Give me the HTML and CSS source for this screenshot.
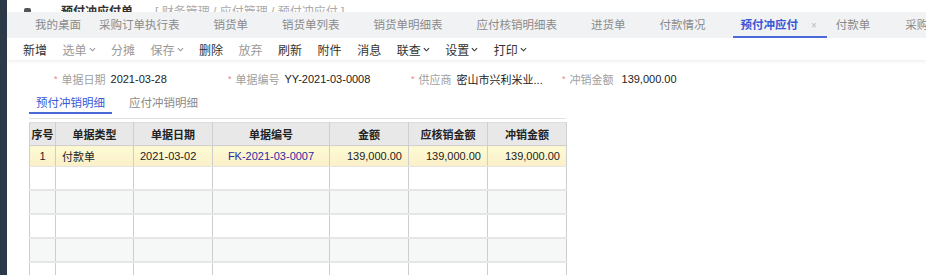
FILE: index.html
```html
<!DOCTYPE html>
<html lang="zh-CN">
<head>
    <meta charset="UTF-8">
    <title>预付冲应付</title>
    <link rel="stylesheet" href="styles.css">
</head>
<body>
    <div class="frame">
        <div class="side"></div>
        <div class="main">
            <div class="title-strip">
                <span class="title-icon"></span>
                <span class="title-name">预付冲应付单</span>
                <span class="title-path">[ 财务管理 / 应付管理 / 预付冲应付 ]</span>
            </div>

            <div class="tabbar">
                <span class="tab first">我的桌面</span>
                <span class="tab">采购订单执行表</span>
                <span class="tab">销货单</span>
                <span class="tab">销货单列表</span>
                <span class="tab">销货单明细表</span>
                <span class="tab">应付核销明细表</span>
                <span class="tab">进货单</span>
                <span class="tab">付款情况</span>
                <span class="tab active">预付冲应付<i class="close">×</i></span>
                <span class="tab">付款单</span>
                <span class="tab-sep"></span>
                <span class="tab last">采购订单</span>
            </div>

            <div class="toolbar">
                <span class="tool on">新增</span>
                <span class="tool">选单<svg class="caret" viewBox="0 0 8 5"><path d="M1 1l3 3 3-3"/></svg></span>
                <span class="tool">分摊</span>
                <span class="tool">保存<svg class="caret" viewBox="0 0 8 5"><path d="M1 1l3 3 3-3"/></svg></span>
                <span class="tool on">删除</span>
                <span class="tool">放弃</span>
                <span class="tool on">刷新</span>
                <span class="tool on">附件</span>
                <span class="tool on">消息</span>
                <span class="tool on">联查<svg class="caret" viewBox="0 0 8 5"><path d="M1 1l3 3 3-3"/></svg></span>
                <span class="tool on">设置<svg class="caret" viewBox="0 0 8 5"><path d="M1 1l3 3 3-3"/></svg></span>
                <span class="tool on">打印<svg class="caret" viewBox="0 0 8 5"><path d="M1 1l3 3 3-3"/></svg></span>
            </div>

            <div class="content">
                <div class="form-row">
                    <div class="field f1"><i>*</i><label>单据日期</label><span>2021-03-28</span></div>
                    <div class="field f2"><i>*</i><label>单据编号</label><span>YY-2021-03-0008</span></div>
                    <div class="field f3"><i>*</i><label>供应商</label><span>密山市兴利米业...</span></div>
                    <div class="field f4"><i>*</i><label>冲销金额</label><span>139,000.00</span></div>
                </div>

                <div class="subtabs">
                    <span class="subtab active">预付冲销明细</span>
                    <span class="subtab">应付冲销明细</span>
                </div>

                <table class="grid">
                    <colgroup>
                        <col style="width:26px">
                        <col style="width:78px">
                        <col style="width:79px">
                        <col style="width:117px">
                        <col style="width:79px">
                        <col style="width:79px">
                        <col style="width:79px">
                    </colgroup>
                    <thead>
                        <tr>
                            <th>序号</th>
                            <th>单据类型</th>
                            <th>单据日期</th>
                            <th>单据编号</th>
                            <th>金额</th>
                            <th>应核销金额</th>
                            <th>冲销金额</th>
                        </tr>
                    </thead>
                    <tbody>
                        <tr class="sel">
                            <td class="c">1</td>
                            <td>付款单</td>
                            <td>2021-03-02</td>
                            <td class="c link">FK-2021-03-0007</td>
                            <td class="r">139,000.00</td>
                            <td class="r">139,000.00</td>
                            <td class="r">139,000.00</td>
                        </tr>
                        <tr><td></td><td></td><td></td><td></td><td></td><td></td><td></td></tr>
                        <tr class="alt"><td></td><td></td><td></td><td></td><td></td><td></td><td></td></tr>
                        <tr><td></td><td></td><td></td><td></td><td></td><td></td><td></td></tr>
                        <tr class="alt"><td></td><td></td><td></td><td></td><td></td><td></td><td></td></tr>
                        <tr><td></td><td></td><td></td><td></td><td></td><td></td><td></td></tr>
                    </tbody>
                </table>
            </div>
        </div>
    </div>
</body>
</html>
```

FILE: styles.css
```css
html, body {
    margin: 0;
    padding: 0;
    height: 100%;
    overflow: hidden;
}

body {
    font-family: "Liberation Sans", "Noto Sans CJK SC", sans-serif;
    font-size: 11px;
    color: #222;
    background: #fff;
}

.frame {
    display: flex;
    height: 275px;
}

.side {
    width: 7px;
    flex: none;
    background: #2c3948;
}

.main {
    flex: 1;
    min-width: 0;
    background: #fff;
}

/* top title, cut by the window edge */
.title-strip {
    height: 12px;
    overflow: hidden;
    display: flex;
    align-items: flex-end;
    gap: 22px;
    padding-left: 17px;
    background: #fff;
    font-size: 12px;
    line-height: 12px;
}

.title-strip > * {
    transform: translateY(6px);
}

.title-icon {
    width: 7px;
    height: 10px;
    background: #555;
    border-radius: 2px;
}

.title-name {
    color: #333;
    font-weight: bold;
    margin-left: 8px;
}

.title-path {
    color: #aaa;
}

.tabbar {
    height: 26px;
    display: flex;
    align-items: center;
    background: #f1f2f4;
    white-space: nowrap;
    overflow: hidden;
    font-size: 11.5px;
    color: #8a8a8a;
}

.tab {
    position: relative;
    height: 26px;
    line-height: 27px;
    padding: 0 17px;
}

.tab.first {
    padding-left: 28px;
    padding-right: 1px;
}

.tab.active {
    color: #3858d6;
    font-weight: bold;
    padding: 0 0 0 8px;
    box-shadow: inset 0 -2px 0 #4a68d8;
    margin-left: 10px;
    margin-right: -8px;
}

.tab.active .close {
    font-style: normal;
    font-weight: normal;
    color: #bbb;
    font-size: 10px;
    margin: 0 10px 0 13px;
}

.tab-sep {
    width: 1px;
    height: 16px;
    background: #d8d8d8;
    margin-left: 12px;
}

.tab.last {
    padding-left: 6px;
}

.toolbar {
    height: 22px;
    display: flex;
    align-items: center;
    gap: 15.5px;
    padding-left: 16px;
    background: #fff;
    font-size: 12px;
    color: #999;
    box-shadow: 0 2px 3px rgba(0, 0, 0, 0.06);
    position: relative;
}

.tool {
    display: flex;
    align-items: center;
    white-space: nowrap;
}

.tool.on {
    color: #333;
}

.caret {
    width: 7px;
    height: 5px;
    margin-left: 2px;
    fill: none;
    stroke: currentColor;
    stroke-width: 1.2;
}

.content {
    background: #fff;
    padding: 10px 0 0 22px;
}

.form-row {
    display: flex;
    height: 18px;
    align-items: center;
    padding-left: 25px;
}

.field {
    display: flex;
    align-items: center;
    white-space: nowrap;
}

.f1 { width: 174px; }
.f2 { width: 183px; }
.f3 { width: 151px; }

.field i {
    font-style: normal;
    color: #f08080;
    font-size: 9px;
    margin-right: 4px;
}

.field label {
    color: #a0a0a0;
    margin-right: 5px;
}

.f4 label {
    margin-right: 8px;
}

.field span {
    color: #222;
}

.subtabs {
    display: flex;
    margin-top: 6px;
    height: 24px;
    width: 537px;
    border-bottom: 1px solid #e2e2e2;
    font-size: 11.5px;
    color: #8a8a8a;
}

.subtab {
    padding: 0 7px;
    line-height: 19px;
}

.subtab.active {
    color: #3858d6;
    margin-right: 10px;
    box-shadow: inset 0 -2px 0 #4a68d8;
    height: 20px;
}

.grid {
    margin-top: 3px;
    border-collapse: collapse;
    table-layout: fixed;
    width: 537px;
}

.grid th {
    height: 22px;
    background: #e8e8e8;
    border: 1px solid #d0d0d0;
    border-top-color: #ddd;
    font-weight: bold;
    color: #222;
    padding: 0;
    text-align: center;
}

.grid td {
    height: 22px;
    border-left: 1px solid #cdcdcd;
    border-right: 1px solid #cdcdcd;
    border-bottom: 2px solid #e6e6e6;
    padding: 0 6px;
    white-space: nowrap;
}

.grid td:first-child {
    padding: 0;
}

.grid tr.sel td {
    height: 20px;
    background: linear-gradient(#fcfbd3, #fbefca);
    border-bottom: 1px solid #e4e4e4;
}

.grid tr.alt td {
    background: #f6f7f7;
}

.grid td.c {
    text-align: center;
}

.grid td.r {
    text-align: right;
}

.grid td.link {
    color: #2a2aa8;
}
```
